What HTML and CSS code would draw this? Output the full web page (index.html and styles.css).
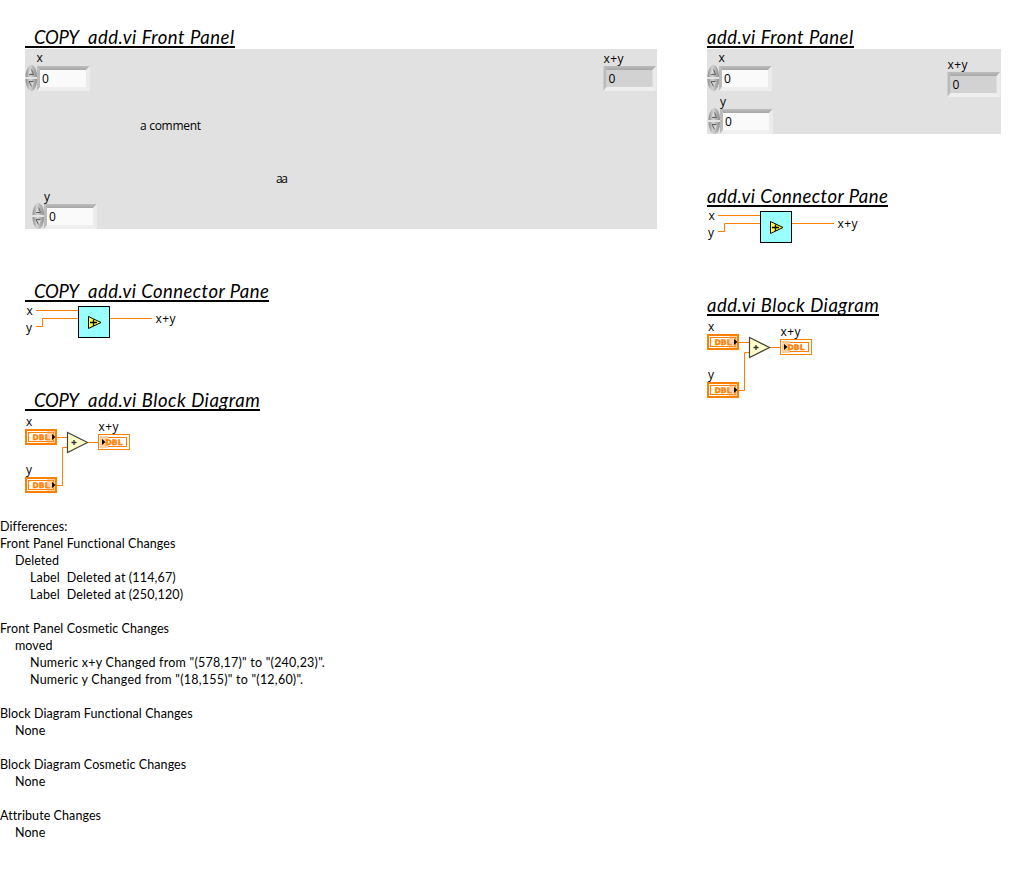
FILE: index.html
```html
<!DOCTYPE html>
<html lang="en">
<head>
<meta charset="utf-8">
<title>VI Differences</title>
<link rel="stylesheet" href="styles.css">
</head>
<body>
<svg class="defs" width="0" height="0" aria-hidden="true">
  <defs>
    <linearGradient id="knob" x1="0" x2="1"><stop offset="0" stop-color="#8c8c8c"/><stop offset=".4" stop-color="#d4d4d4"/><stop offset="1" stop-color="#8e8e8e"/></linearGradient>
    <linearGradient id="shade" x1="0" x2="0" y1="0" y2="1"><stop offset="0" stop-color="#bdbdbd"/><stop offset="1" stop-color="#a6a6a6"/></linearGradient>
    <g id="bevel">
      <path d="M0 0H53L49 4H3Z" fill="url(#shade)"/>
      <path d="M0 0L3 4V21L0 25Z" fill="#bababa"/>
      <path d="M53 0V25L49 21V4Z" fill="#ebebeb"/>
      <path d="M0 25L3 21H49L53 25Z" fill="#efefef"/>
    </g>
    <g id="control">
      <use href="#bevel" x="12" y="1"/>
      <rect x="15" y="5" width="46" height="17" fill="#fafafa"/>
      <path d="M.5 12C.5 5 3.5 0 6.5 0S12 5 12 12Z" fill="url(#knob)"/>
      <path d="M.5 14H12C12 21 9.5 26 6.5 26S.5 21 .5 14Z" fill="url(#knob)"/>
      <path d="M0 13H12" stroke="#e8e8e8"/>
      <path d="M4 9.5L6.5 4.5L8.5 9.5Z" fill="#c8c8c8"/>
      <path d="M4 9.5L6.5 4.5" stroke="#eee" stroke-width=".8"/>
      <path d="M6.5 4.5L8.5 9.5H4" fill="none" stroke="#555" stroke-width=".9"/>
      <path d="M8.5 16.5L6.5 21.5" stroke="#eee" stroke-width=".8"/>
      <path d="M8.5 16.5H4L6.5 21.5" fill="none" stroke="#555" stroke-width=".9"/>
      <text x="17" y="18">0</text>
    </g>
    <g id="indicator">
      <use href="#bevel"/>
      <rect x="3" y="4" width="46" height="17" fill="#d2d2d2"/>
      <text x="5" y="17">0</text>
    </g>
    <g id="connector">
      <path d="M11 7.5H53M11 23.5H17.5V15.5H53M85 15.5H127" class="wire"/>
      <rect x="53.5" y="3.5" width="31" height="31" fill="#9ff" stroke="#000"/>
      <path d="M63.5 13.5V25.5L76 19.5Z" fill="#ff3" stroke="#000"/>
      <path d="M65 19.5H72M68.5 16.5V23" stroke="#000" stroke-width="1.4"/>
      <text x="1.5" y="12.4">x</text><text x="1" y="29">y</text>
      <text x="130.5" y="20.4" textLength="20">x+y</text>
    </g>
    <g id="terminal">
      <rect x="1" y="1" width="30" height="14" fill="#fff" stroke="#ff8000" stroke-width="2"/>
      <rect x="3.5" y="3.5" width="25" height="9" fill="#fff" stroke="#ff8000"/>
      <text x="7.5" y="11" class="dbl" textLength="17" lengthAdjust="spacingAndGlyphs">DBL</text>
      <rect x="22" y="2" width="8" height="12" fill="#ff9a40" fill-opacity=".45"/>
      <path d="M27 5L30.5 8L27 11Z" fill="#000"/>
    </g>
    <g id="block">
      <path d="M32 25.5H42M32 73.5H37.5V35.5H42M63 30.5H73" class="wire"/>
      <use href="#terminal" x="0" y="17"/>
      <use href="#terminal" x="0" y="65"/>
      <path d="M42.5 20.5V40.5L62.5 30.5Z" fill="#ffc" stroke="#444438" stroke-width="1.2"/>
      <path d="M46.5 30.5H51.5M49 28V33" stroke="#333" stroke-width="1.3"/>
      <rect x="73.5" y="22.5" width="31" height="15" fill="#fff" stroke="#ff8000"/>
      <rect x="76.5" y="25.5" width="25" height="9" fill="#fff" stroke="#ff8000"/>
      <rect x="75" y="24" width="8" height="12" fill="#ffcfa0"/>
      <text x="80.5" y="33" class="dbl" textLength="17" lengthAdjust="spacingAndGlyphs">DBL</text>
      <path d="M77 27L80.5 30L77 33Z" fill="#000"/>
      <text x="1" y="13.5">x</text><text x="1" y="61.5">y</text>
      <text x="73.5" y="18.5" textLength="20">x+y</text>
    </g>
  </defs>
</svg>
<main class="report">
  <section class="column copy">
    <h2 class="title"><span class="prefix">  COPY  </span><span class="n1">add.vi Front Panel</span></h2>
    <svg class="panel" width="632" height="180">
      <text x="11.5" y="13">x</text>
      <use href="#control" x="0" y="16"/>
      <text x="19" y="151.5">y</text>
      <use href="#control" x="7" y="154"/>
      <text x="578.5" y="13.5" textLength="20">x+y</text>
      <use href="#indicator" x="578.5" y="17"/>
      <text x="115" y="80.5" textLength="61">a comment</text>
      <text x="251" y="133.5" textLength="12">aa</text>
    </svg>
    <h2 class="title connector-title"><span class="prefix">  COPY  </span><span class="n2">add.vi Connector Pane</span></h2>
    <svg class="diagram" width="160" height="40"><use href="#connector"/></svg>
    <h2 class="title block-title"><span class="prefix">  COPY  </span><span class="n3">add.vi Block Diagram</span></h2>
    <svg class="diagram" width="120" height="85"><use href="#block"/></svg>
  </section>
  <section class="column original">
    <h2 class="title"><span class="n1">add.vi Front Panel</span></h2>
    <svg class="panel" width="294" height="85">
      <text x="11.5" y="13">x</text>
      <use href="#control" x="0" y="16"/>
      <text x="13" y="56.5">y</text>
      <use href="#control" x="1" y="59"/>
      <text x="240.5" y="19.5" textLength="20">x+y</text>
      <use href="#indicator" x="240.5" y="23"/>
    </svg>
    <h2 class="title connector-title"><span class="n2">add.vi Connector Pane</span></h2>
    <svg class="diagram" width="160" height="40"><use href="#connector"/></svg>
    <h2 class="title block-title"><span class="n3">add.vi Block Diagram</span></h2>
    <svg class="diagram" width="120" height="85"><use href="#block"/></svg>
  </section>
</main>
<section class="differences">
  <p>Differences:</p>
  <p>Front Panel Functional Changes</p>
  <p class="kind">Deleted</p>
  <p class="item">Label  Deleted at (114,67)</p>
  <p class="item">Label  Deleted at (250,120)</p>
  <p class="group">Front Panel Cosmetic Changes</p>
  <p class="kind">moved</p>
  <p class="item change">Numeric x+y Changed from "(578,17)" to "(240,23)".</p>
  <p class="item change">Numeric y Changed from "(18,155)" to "(12,60)".</p>
  <p class="group">Block Diagram Functional Changes</p>
  <p class="kind">None</p>
  <p class="group">Block Diagram Cosmetic Changes</p>
  <p class="kind">None</p>
  <p class="group">Attribute Changes</p>
  <p class="kind">None</p>
</section>
</body>
</html>
```
FILE: styles.css
```css
body { margin: 0; background: #fff; color: #000; }
.defs { position: absolute; }
svg { display: block; flex: none; }
svg text { font: 12px "Open Sans", sans-serif; fill: #000; }
svg .dbl { font: 700 7.5px "DejaVu Sans", sans-serif; fill: #ff8000; stroke: #ff8000; stroke-width: .4px; }
.wire { fill: none; stroke: #ff8000; }
.panel { background: #e1e1e1; }

.report { display: flex; gap: 50px; height: 518px; padding: 25px 25px 0; box-sizing: border-box; }
.column { display: flex; flex-direction: column; align-items: flex-start; }
.copy { width: 632px; }
.original { width: 294px; }

.title {
  display: flex; box-sizing: border-box; height: 23px; margin: 0 0 1px;
  border-bottom: 2px solid #000; overflow: hidden; white-space: pre;
  font: italic 18.5px/24px Lato, sans-serif;
}
.prefix { width: 63px; padding-left: 1px; box-sizing: border-box; letter-spacing: -.3px; }
.n1 { width: 147px; letter-spacing: .53px; }
.n2 { width: 181px; letter-spacing: .45px; }
.n3 { width: 172px; letter-spacing: .53px; }
.connector-title { margin-top: 50px; }
.block-title { margin-top: 45px; }

.differences { font: 12.5px/17px Lato, sans-serif; letter-spacing: .08px; }
.differences p { margin: 0; white-space: pre; }
.differences .group { margin-top: 17px; }
.differences .kind { padding-left: 15px; }
.differences .item { padding-left: 30px; letter-spacing: .15px; }
.differences .change { letter-spacing: .23px; }
```
